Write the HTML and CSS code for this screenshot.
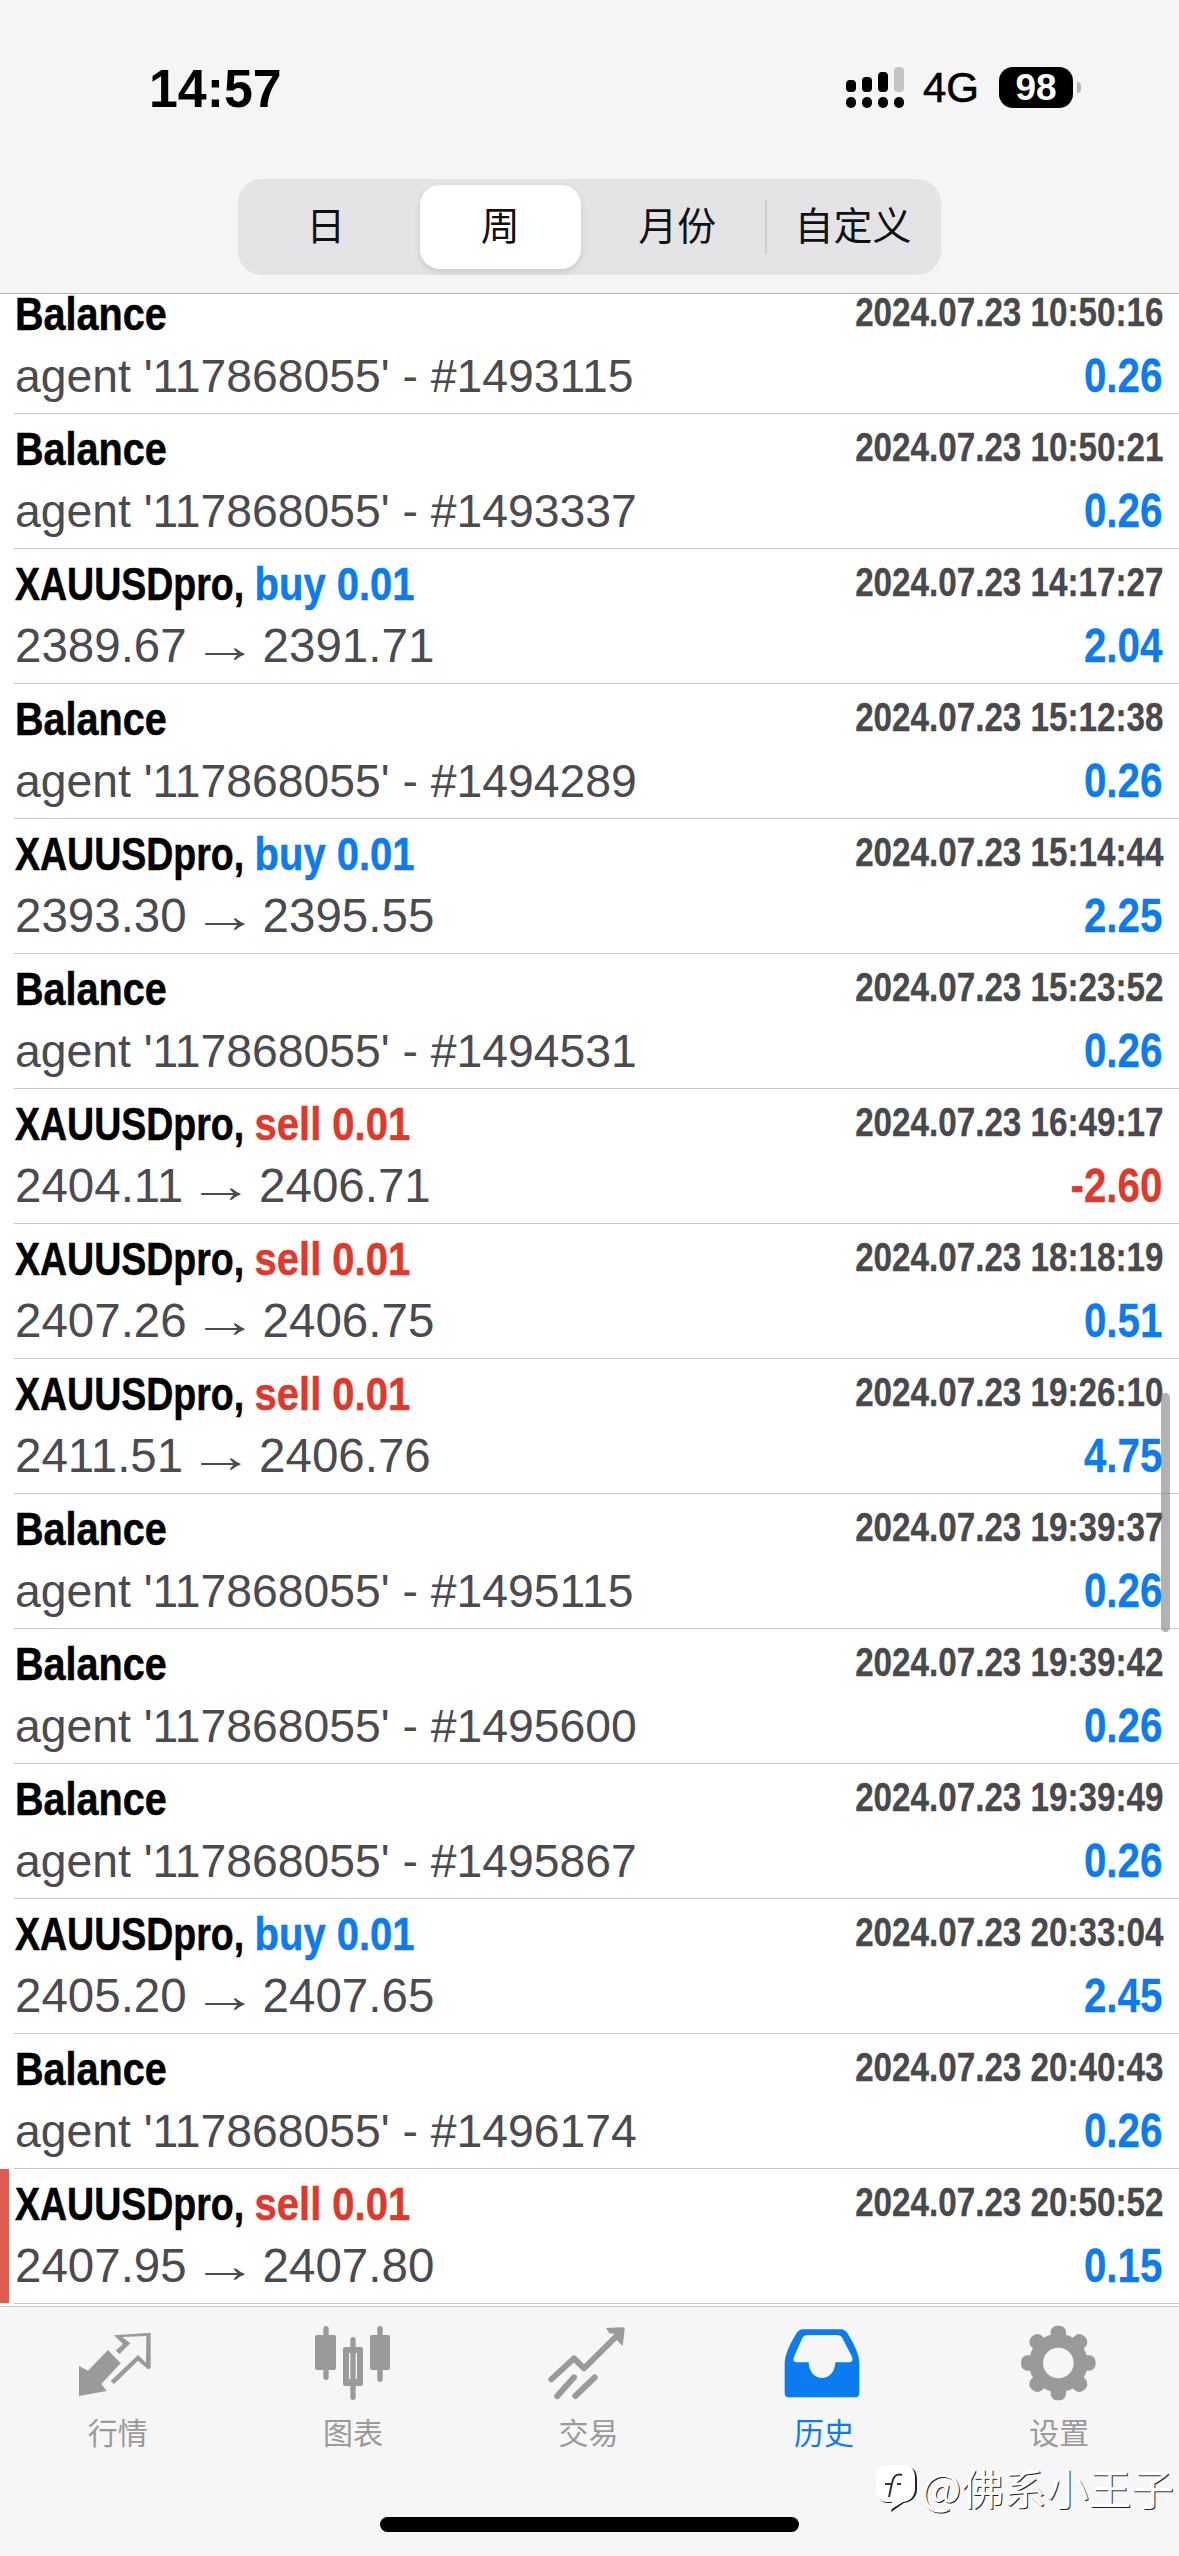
FILE: index.html
```html
<!DOCTYPE html>
<html lang="zh-CN">
<head>
    <meta charset="UTF-8">
    <title>历史</title>
    <link rel="stylesheet" href="styles.css">
</head>
<body>
    <div class="phone">
        <header class="top">
            <div class="status">
                <span class="clock">14:57</span>
                <div class="status-right">
                    <svg class="signal" viewBox="0 0 58 41">
                        <rect x="0" y="13" width="10" height="12" rx="4"/>
                        <rect x="16" y="10" width="10" height="15" rx="4"/>
                        <rect x="32" y="5" width="10" height="20" rx="4"/>
                        <rect class="signal-off" x="48" y="0" width="10" height="25" rx="4"/>
                        <rect x="0" y="30" width="10" height="11" rx="5"/>
                        <rect x="16" y="30" width="10" height="11" rx="5"/>
                        <rect x="32" y="30" width="10" height="11" rx="5"/>
                        <rect x="48" y="30" width="10" height="11" rx="5"/>
                    </svg>
                    <span class="net">4G</span>
                    <span class="battery">98</span>
                    <span class="battery-nub"></span>
                </div>
            </div>
            <div class="seg">
                <div class="seg-item">日</div>
                <div class="seg-item seg-on">周</div>
                <div class="seg-item seg-line">月份</div>
                <div class="seg-item">自定义</div>
            </div>
        </header>

        <main class="list">
            <div class="row">
                <div class="line1"><span class="name">Balance</span><span class="time">2024.07.23 10:50:16</span></div>
                <div class="line2"><span class="sub">agent '117868055' - #1493115</span><span class="amt">0.26</span></div>
            </div>
            <div class="row">
                <div class="line1"><span class="name">Balance</span><span class="time">2024.07.23 10:50:21</span></div>
                <div class="line2"><span class="sub">agent '117868055' - #1493337</span><span class="amt">0.26</span></div>
            </div>
            <div class="row">
                <div class="line1"><span class="name name-sym">XAUUSDpro, <b class="buy">buy 0.01</b></span><span class="time">2024.07.23 14:17:27</span></div>
                <div class="line2"><span class="sub sub-price">2389.67 <span class="arrow">→</span> 2391.71</span><span class="amt">2.04</span></div>
            </div>
            <div class="row">
                <div class="line1"><span class="name">Balance</span><span class="time">2024.07.23 15:12:38</span></div>
                <div class="line2"><span class="sub">agent '117868055' - #1494289</span><span class="amt">0.26</span></div>
            </div>
            <div class="row">
                <div class="line1"><span class="name name-sym">XAUUSDpro, <b class="buy">buy 0.01</b></span><span class="time">2024.07.23 15:14:44</span></div>
                <div class="line2"><span class="sub sub-price">2393.30 <span class="arrow">→</span> 2395.55</span><span class="amt">2.25</span></div>
            </div>
            <div class="row">
                <div class="line1"><span class="name">Balance</span><span class="time">2024.07.23 15:23:52</span></div>
                <div class="line2"><span class="sub">agent '117868055' - #1494531</span><span class="amt">0.26</span></div>
            </div>
            <div class="row">
                <div class="line1"><span class="name name-sym">XAUUSDpro, <b class="sell">sell 0.01</b></span><span class="time">2024.07.23 16:49:17</span></div>
                <div class="line2"><span class="sub sub-price">2404.11 <span class="arrow">→</span> 2406.71</span><span class="amt amt-loss">-2.60</span></div>
            </div>
            <div class="row">
                <div class="line1"><span class="name name-sym">XAUUSDpro, <b class="sell">sell 0.01</b></span><span class="time">2024.07.23 18:18:19</span></div>
                <div class="line2"><span class="sub sub-price">2407.26 <span class="arrow">→</span> 2406.75</span><span class="amt">0.51</span></div>
            </div>
            <div class="row">
                <div class="line1"><span class="name name-sym">XAUUSDpro, <b class="sell">sell 0.01</b></span><span class="time">2024.07.23 19:26:10</span></div>
                <div class="line2"><span class="sub sub-price">2411.51 <span class="arrow">→</span> 2406.76</span><span class="amt">4.75</span></div>
            </div>
            <div class="row">
                <div class="line1"><span class="name">Balance</span><span class="time">2024.07.23 19:39:37</span></div>
                <div class="line2"><span class="sub">agent '117868055' - #1495115</span><span class="amt">0.26</span></div>
            </div>
            <div class="row">
                <div class="line1"><span class="name">Balance</span><span class="time">2024.07.23 19:39:42</span></div>
                <div class="line2"><span class="sub">agent '117868055' - #1495600</span><span class="amt">0.26</span></div>
            </div>
            <div class="row">
                <div class="line1"><span class="name">Balance</span><span class="time">2024.07.23 19:39:49</span></div>
                <div class="line2"><span class="sub">agent '117868055' - #1495867</span><span class="amt">0.26</span></div>
            </div>
            <div class="row">
                <div class="line1"><span class="name name-sym">XAUUSDpro, <b class="buy">buy 0.01</b></span><span class="time">2024.07.23 20:33:04</span></div>
                <div class="line2"><span class="sub sub-price">2405.20 <span class="arrow">→</span> 2407.65</span><span class="amt">2.45</span></div>
            </div>
            <div class="row">
                <div class="line1"><span class="name">Balance</span><span class="time">2024.07.23 20:40:43</span></div>
                <div class="line2"><span class="sub">agent '117868055' - #1496174</span><span class="amt">0.26</span></div>
            </div>
            <div class="row row-mark">
                <div class="line1"><span class="name name-sym">XAUUSDpro, <b class="sell">sell 0.01</b></span><span class="time">2024.07.23 20:50:52</span></div>
                <div class="line2"><span class="sub sub-price">2407.95 <span class="arrow">→</span> 2407.80</span><span class="amt">0.15</span></div>
            </div>
            <div class="scrollbar"></div>
        </main>

        <footer class="tabbar">
            <nav class="tabs">
                <div class="tab">
                    <svg class="tab-icon" viewBox="0 0 300 255">
                        <path d="M33 138 L33 228 L116 213 L100 192 L158 130 L120 90 L60 152 Z"/>
                        <path d="M248 38 L138 46 L165 72 L143 92 L155 102 L187 70 L163 51 L235 48 L234 128 L210 105 L128 183 L138 192 L210 122 L240 148 L248 145 Z"/>
                    </svg>
                    <span class="tab-label">行情</span>
                </div>
                <div class="tab">
                    <svg class="tab-icon" viewBox="0 0 300 255">
                        <rect x="61" y="18" width="16" height="162" rx="8"/>
                        <rect x="36" y="45" width="63" height="105" rx="6"/>
                        <rect x="142" y="51" width="16" height="189" rx="8"/>
                        <path fill-rule="evenodd" d="M126 81 H174 a6 6 0 0 1 6 6 V192 a6 6 0 0 1 -6 6 H126 a6 6 0 0 1 -6 -6 V87 a6 6 0 0 1 6 -6 Z M138 99 V177 H162 V99 Z"/>
                        <rect x="223" y="18" width="16" height="168" rx="8"/>
                        <rect x="201" y="45" width="60" height="105" rx="6"/>
                    </svg>
                    <span class="tab-label">图表</span>
                </div>
                <div class="tab">
                    <svg class="tab-icon" viewBox="0 0 300 255">
                        <path class="icon-stroke" d="M40 178 L108 115 L138 145 L238 46"/>
                        <path class="icon-stroke" d="M58 228 L108 172"/>
                        <path class="icon-stroke" d="M112 228 L170 172"/>
                        <path d="M204 24 L254 22 Q260 22 260 28 L254 78 L238 62 L234 42 L214 40 Z"/>
                    </svg>
                    <span class="tab-label">交易</span>
                </div>
                <div class="tab tab-on">
                    <svg class="tab-icon" viewBox="0 0 300 255">
                        <path fill-rule="evenodd" d="M88 28 H200 Q214 28 222 42 Q256 98 256 128 V218 Q256 232 242 232 H46 Q32 232 32 218 V128 Q32 98 66 42 Q74 28 88 28 Z M100 45 Q90 45 85 54 L60 110 Q54 125 68 127 H104 C106 190 182 190 184 127 H226 Q240 125 234 110 L205 54 Q200 45 190 45 Z"/>
                    </svg>
                    <span class="tab-label">历史</span>
                </div>
                <div class="tab">
                    <svg class="tab-icon" viewBox="0 0 300 255">
                        <circle cx="148" cy="129" r="88"/>
                        <rect x="125" y="17" width="46" height="224" rx="20"/>
                        <rect x="125" y="17" width="46" height="224" rx="20" transform="rotate(45 148 129)"/>
                        <rect x="125" y="17" width="46" height="224" rx="20" transform="rotate(90 148 129)"/>
                        <rect x="125" y="17" width="46" height="224" rx="20" transform="rotate(135 148 129)"/>
                        <circle class="gear-hole" cx="148" cy="129" r="46"/>
                    </svg>
                    <span class="tab-label">设置</span>
                </div>
            </nav>
            <div class="home-bar"></div>
            <!-- 워터마크 -->
            <div class="watermark">
                <svg class="mark-logo" viewBox="0 0 42 49">
                    <path class="mark-shadow" d="M12 2 H28 C37 2 41 7 41 15 V25 C41 34 35 38 28 39 L15 48 L17 39 H12 C5 39 1 33 1 25 V15 C1 7 5 2 12 2 Z"/>
                    <path class="mark-body" d="M11 1 H27 C36 1 39 6 39 14 V24 C39 33 34 37 27 38 L14 46 L16 38 H11 C4 38 0 32 0 24 V14 C0 6 4 1 11 1 Z"/>
                    <path class="mark-f" d="M26 11 C20 9 17 13 16 19 L13 33 M9 20 H15 M21 20 H25"/>
                </svg>
                <span class="mark-text">@佛系小王子</span>
            </div>
        </footer>
    </div>
</body>
</html>
```

FILE: styles.css
```css
body{
    margin: 0;
    background-color: #f5f5f5;
}
.phone{
    width: 1179px;
    height: 2556px;
    overflow: hidden;
    display: flex;
    flex-direction: column;
    font-family: "Liberation Sans", "Noto Sans CJK SC", sans-serif;
}

/* 상단 */
.top{
    height: 293px;
    flex-shrink: 0;
    background-color: #f5f5f5;
    border-bottom: 1px solid #b4b4b4;
}
.status{
    display: flex;
    justify-content: space-between;
    align-items: center;
    height: 41px;
    padding: 67px 98px 0 149px;
}
.clock{
    display: inline-block;
    font-size: 54px;
    font-weight: bold;
    color: #000;
    transform: scaleX(0.96);
    transform-origin: left;
}
.status-right{
    display: flex;
    align-items: center;
}
.signal{
    width: 58px;
    height: 41px;
    fill: #000;
}
.signal-off{
    fill: #c4c4c4;
}
.net{
    font-size: 42px;
    margin-left: 19px;
    color: #000;
    -webkit-text-stroke: 0.6px #000;
}
.battery{
    width: 74px;
    height: 41px;
    margin-left: 20px;
    background-color: #000;
    border-radius: 14px;
    color: #fff;
    font-size: 37px;
    font-weight: bold;
    line-height: 41px;
    text-align: center;
}
.battery-nub{
    width: 4px;
    height: 11px;
    margin-left: 4px;
    background-color: #b8b8b8;
    border-radius: 0 6px 6px 0;
}

/* 기간 선택 */
.seg{
    width: 703px;
    height: 96px;
    margin: 71px auto 0;
    background-color: #e4e4e6;
    border-radius: 24px;
    display: grid;
    grid-template-columns: repeat(4, 1fr);
    font-size: 39px;
    color: #111;
    text-align: center;
    line-height: 96px;
}
.seg-item{
    position: relative;
}
.seg-on{
    height: 84px;
    width: 161px;
    margin: 6px 0 0 6px;
    line-height: 84px;
    background-color: #fff;
    border-radius: 20px;
    box-shadow: 0 3px 6px rgba(0,0,0,0.12);
}
.seg-line::after{   /* 월/사용자 사이 구분선 */
    content: "";
    position: absolute;
    right: -2px;
    top: 21px;
    height: 54px;
    width: 2px;
    background-color: #cfcfd2;
}

/* 목록 */
.list{
    height: 2012px;
    flex-shrink: 0;
    display: flow-root;
    background-color: #fff;
    position: relative;
}
.row{
    height: 129px;
    margin: 0 0 0 14px;
    padding: 5px 17px 0 1px;
    border-bottom: 1px solid #c8c8c8;
    position: relative;
}
.row:first-child{   /* 첫 줄은 헤더 밑으로 살짝 올라감 */
    margin-top: -15px;
}
.row-mark::before{
    content: "";
    position: absolute;
    left: -14px;
    top: 0;
    width: 9px;
    height: 134px;
    background-color: #e05c50;
}
.line1,.line2{
    display: flex;
    justify-content: space-between;
    align-items: flex-start;
}
.line1{
    height: 60px;
}
.line2{
    height: 64px;
}
.name{
    display: inline-block;
    font-size: 46px;
    font-weight: bold;
    line-height: 60px;
    color: #000;
    white-space: nowrap;
    -webkit-text-stroke: 0.5px currentColor;
    transform: scaleX(0.86);
    transform-origin: left;
}
.name-sym{
    transform: scaleX(0.815);
}
.buy,.sell{
    display: inline-block;
    transform: scaleX(1.066);
    transform-origin: left;
}
.buy{
    color: #0a7cf0;
}
.sell{
    color: #e0382a;
}
.time{
    display: inline-block;
    margin-right: -1px;
    font-size: 40px;
    font-weight: bold;
    line-height: 56px;
    color: #48484d;
    white-space: nowrap;
    -webkit-text-stroke: 0.3px currentColor;
    transform: scaleX(0.83);
    transform-origin: right;
}
.sub{
    font-size: 46.3px;
    line-height: 64px;
    color: #4a4a50;
    white-space: nowrap;
}
.sub-price{
    font-size: 47.5px;
    word-spacing: -8px;
}
.arrow{
    display: inline-block;
    margin: 0 9px;
    transform: scaleX(1.4);
}
.amt{
    display: inline-block;
    font-size: 48px;
    font-weight: bold;
    line-height: 64px;
    color: #0a7cf0;
    -webkit-text-stroke: 0.3px currentColor;
    transform: scaleX(0.84);
    transform-origin: right;
}
.amt-loss{
    color: #e0382a;
}
.scrollbar{
    position: absolute;
    top: 1099px;
    left: 1161px;
    width: 9px;
    height: 239px;
    border-radius: 5px;
    background-color: rgba(130,130,130,0.62);
}

/* 하단 탭 */
.tabbar{
    height: 249px;
    flex-shrink: 0;
    background-color: #f6f6f6;
    border-top: 1px solid #c8c8c8;
    position: relative;
}
.tabs{
    display: grid;
    grid-template-columns: repeat(5, 1fr);
    padding: 13px 2px 0 0;
}
.tab{
    display: flex;
    flex-direction: column;
    align-items: center;
    color: #9a9a9a;
}
.tab-on{
    color: #0a7cf0;
}
.tab-icon{
    width: 100px;
    height: 85px;
    fill: currentColor;
}
.icon-stroke{
    fill: none;
    stroke: currentColor;
    stroke-width: 18;
    stroke-linecap: round;
    stroke-linejoin: round;
}
.gear-hole{
    fill: #f6f6f6;
}
.tab-label{
    margin-top: 6px;
    font-size: 30px;
    line-height: 40px;
    font-family: "Noto Sans CJK SC", sans-serif;
}
.home-bar{
    width: 419px;
    height: 15px;
    margin: 66px auto 0;
    background-color: #000;
    border-radius: 8px;
}
.watermark{     /* 화면 위에 얹힌 워터마크 */
    position: absolute;
    left: 876px;
    top: 156px;
    display: flex;
    align-items: flex-start;
}
.mark-logo{
    width: 42px;
    height: 49px;
    margin-top: 1px;
}
.mark-shadow{
    fill: #222;
}
.mark-body{
    fill: #fff;
}
.mark-f{
    fill: none;
    stroke: #333;
    stroke-width: 2;
}
.mark-text{
    margin-left: 3px;
    font-family: "Noto Sans CJK SC", sans-serif;
    font-size: 42.5px;
    line-height: 48px;
    color: #fff;
    text-shadow: 1px 1px 0 #222;
    white-space: nowrap;
}
```
